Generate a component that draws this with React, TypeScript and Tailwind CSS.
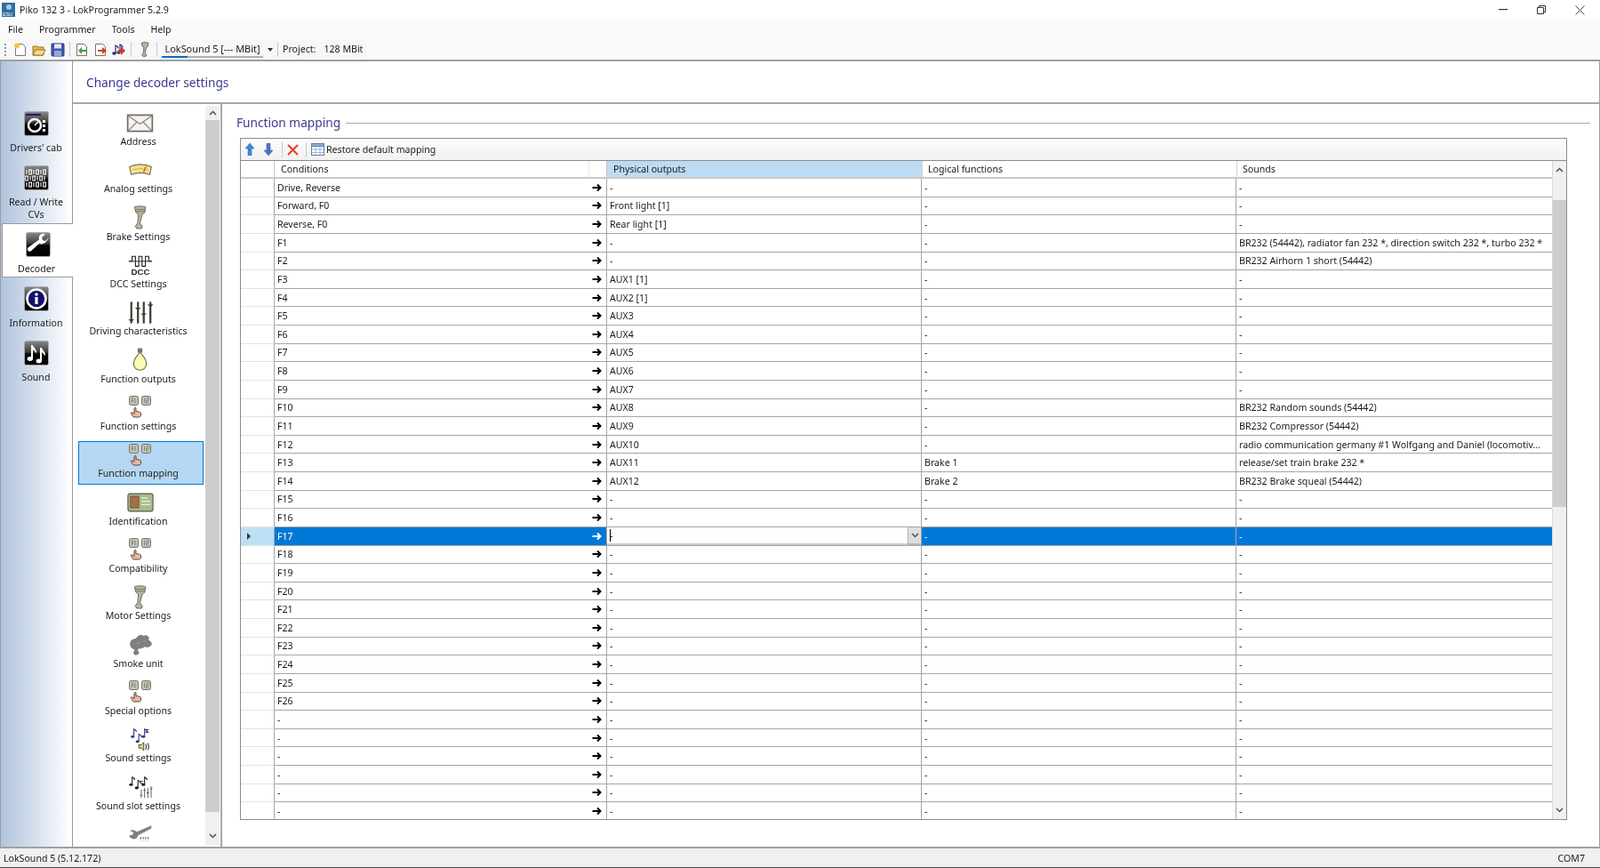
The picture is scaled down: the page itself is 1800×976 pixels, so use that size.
import React from "react";

const Tile = ({ children }: { children: React.ReactNode }) => (
  <svg width="28" height="28" viewBox="0 0 28 28" className="block">
    <defs>
      <linearGradient id="tileg" x1="0" y1="0" x2="0" y2="1">
        <stop offset="0" stopColor="#8a8a8a" />
        <stop offset="0.45" stopColor="#3c3c3c" />
        <stop offset="0.55" stopColor="#050505" />
        <stop offset="1" stopColor="#000" />
      </linearGradient>
    </defs>
    <rect x="0.5" y="0.5" width="27" height="27" rx="2" fill="url(#tileg)" stroke="#aaa" />
    {children}
  </svg>
);

const CabIcon = () => (
  <Tile>
    <rect x="2" y="3" width="17" height="2" fill="#17177a" />
    <circle cx="12" cy="16" r="7" fill="none" stroke="#fff" strokeWidth="2.4" />
    <path d="M12 16l4-4" stroke="#fff" strokeWidth="1.4" />
    <rect x="21" y="10" width="3" height="3" fill="#fff" />
    <rect x="21" y="15" width="3" height="3" fill="#fff" />
    <rect x="21" y="20" width="3" height="3" fill="#fff" />
  </Tile>
);
const BinIcon = () => (
  <Tile>
    {[5, 12, 19].map((y, r) => (
      <g key={y} fill="none" stroke="#fff" strokeWidth="1.1">
        {[3, 7, 11, 15, 19, 23].map((x, c) =>
          (r + c) % 2 === 0 ? (
            <path key={x} d={`M${x} ${y}v5`} />
          ) : (
            <rect key={x} x={x - 1.2} y={y} width="2.6" height="5" />
          ),
        )}
      </g>
    ))}
  </Tile>
);
const WrenchTile = () => (
  <Tile>
    <path
      d="M26 6l-4 4-3-1-1-3 4-4c-3-1-6 0-7 3-.5 1.500-.3 2.500 0 3.500L3 17c-1.500 1.200-1.500 3-.5 4 1 1.200 3 1 4-.2l8.500-7.800c1.500.5 3 .5 4.500 0 3-1 5-4 6.500-7z"
      fill="#fff"
    />
  </Tile>
);
const InfoTile = () => (
  <Tile>
    <circle cx="14" cy="14" r="10.500" fill="#10106a" stroke="#fff" strokeWidth="2.600" />
    <circle cx="14" cy="9" r="1.800" fill="#fff" />
    <rect x="12.400" y="12" width="3.200" height="8" fill="#fff" />
  </Tile>
);
const NotesTile = () => (
  <Tile>
    <path d="M8 20V5l2 0c.5 3 4 4 4 8l-1 1c0-2-2-3-3-4v10z" fill="#fff" />
    <ellipse cx="6.800" cy="20.500" rx="3.200" ry="2.400" fill="#fff" />
    <path d="M18 23V8l2 0c.5 3 4 4 4 8l-1 1c0-2-2-3-3-4v10z" fill="#fff" />
    <ellipse cx="16.800" cy="23" rx="3.200" ry="2.400" fill="#fff" />
  </Tile>
);

const Envelope = () => (
  <svg width="31" height="21" viewBox="0 0 32 22">
    <rect x="1.500" y="1.500" width="29" height="19" fill="#f6f4f0" stroke="#6e6a64" strokeWidth="1.800" />
    <path d="M2 2l14 10L30 2M2 20l10-10M30 20L20 10" fill="none" stroke="#8b8780" strokeWidth="1.300" />
  </svg>
);
const Gauge = () => (
  <svg width="30" height="14" viewBox="0 0 30 16">
    <path d="M1 4c8-4 20-4 28 0l-2 10c-7-2.500-17-2.500-24 0z" fill="#f3e58a" stroke="#77705a" strokeWidth="1.300" />
    <path d="M19 11l3-7" stroke="#c9432b" strokeWidth="1.500" />
    <path d="M5 8c6-2 14-2 20 0" stroke="#c7a35a" fill="none" />
  </svg>
);
const Piston = () => (
  <svg width="17" height="27" viewBox="0 0 18 30">
    <path d="M2 2c4-1.500 10-1.500 14 0l-1 7-3 2-3 11 3 4-1 3H5l-2-3 3-4 1-11-3-2z" fill="#b9b59c" stroke="#66635a" strokeWidth="1" />
    <path d="M3 5h12M3 7.500h12" stroke="#66635a" strokeWidth="0.800" />
    <circle cx="8" cy="26" r="1.200" fill="#fff" stroke="#66635a" strokeWidth="0.600" />
  </svg>
);
const Dcc = () => (
  <svg width="28" height="24" viewBox="0 0 30 25">
    <path d="M1 8h4V2h4v12h4V2h4v12h4V2h4v6h4" fill="none" stroke="#222" strokeWidth="1.200" />
    <path d="M1 8h28" stroke="#222" strokeWidth="1" />
    <text x="15" y="24" textAnchor="middle" fontFamily="Liberation Sans, sans-serif" fontWeight="700" fontSize="10.500" fill="#222">DCC</text>
  </svg>
);
const Sliders = ({ w = 28, h = 27, c = "#3f3e34" }: { w?: number; h?: number; c?: string }) => (
  <svg width={w} height={h} viewBox="0 0 30 28">
    {[4, 12, 19, 27].map((x, i) => (
      <g key={x}>
        <path d={`M${x} 1v26`} stroke={c} strokeWidth="2.400" />
        <path d={`M${x - 3.500} ${[22, 8, 15, 4][i]}h7l-3.500 3.500z`} fill={c} />
      </g>
    ))}
  </svg>
);
const Bulb = () => (
  <svg width="19" height="27" viewBox="0 0 20 30">
    <rect x="7" y="0.500" width="6" height="6" rx="1.500" fill="#777" />
    <path d="M10 5c2 4 8 8 8 15 0 5-4 8-8 8s-8-3-8-8c0-7 6-11 8-15z" fill="#fbf8b8" stroke="#6d6a4a" strokeWidth="1.200" />
  </svg>
);
const Keys = () => (
  <svg width="25" height="25" viewBox="0 0 25 25">
    {[0.5, 14.5].map((x, i) => (
      <g key={x}>
        <rect x={x} y="0.500" width="10" height="10" rx="1.800" fill="#c2c2b4" stroke="#75756a" />
        <path d={i ? `M${x + 3} 3v5M${x + 5} 3h2.500v2.500H${x + 5}v2.500h2.500` : `M${x + 3} 3v5M${x + 3} 3h2M${x + 3} 5.500h2M${x + 6.500} 3v5`} stroke="#6a6a60" strokeWidth="0.700" fill="none" />
      </g>
    ))}
    <path d="M6 14.500c0-1.500 2-1.500 2 0V18c.5-.8 1.800-.6 2 .2.5-.6 1.700-.4 1.800.4.6-.4 1.700 0 1.700 1V22c0 1-1 2-2 2H6c-1 0-1.500-.5-2-1.500L2.500 20c-.5-1 .8-1.800 1.500-1l2 1.500z" fill="#ecb9a4" stroke="#4d342a" strokeWidth="0.900" />
  </svg>
);
const IdCard = () => (
  <svg width="30" height="22" viewBox="0 0 32 23">
    <rect x="1" y="1" width="30" height="21" rx="2.500" fill="#a7bd8a" stroke="#50584a" strokeWidth="1.200" />
    <rect x="4" y="4" width="10" height="14" fill="#a86e4a" stroke="#6d4a33" strokeWidth="0.800" />
    <path d="M17 6h8M17 10h11M17 14h11" stroke="#eef2e2" strokeWidth="1.200" />
  </svg>
);
const Smoke = () => (
  <svg width="28" height="26" viewBox="0 0 30 28">
    <path d="M3 14c-1-5 3-7 7-7 1-4 6-6 9-3 1-2 6-1 6 2 0 1-1 2-1 3 3 0 5 3 4 5-1 3-6 3-8 2-2 2-6 3-8 2 0 2-1 4-1 4 2 0 3 2 1 3-2 2-6 1-5-2 1-1 1-3 1-4-3 0-5-2-5-5z" fill="#7f7f7f" stroke="#6c6c6c" strokeWidth="0.800" />
    <path d="M10 12c2 1 4 0 5-1M18 8c1 1 2 2 4 1" stroke="#9b9b9b" fill="none" />
  </svg>
);
const Note = ({ x, y, c }: { x: number; y: number; c: string }) => (
  <g>
    <path d={`M${x} ${y}v-9c1.500.5 3 1.500 3 3.500`} stroke={c} strokeWidth="1.200" fill="none" />
    <ellipse cx={x - 1.500} cy={y} rx="2.300" ry="1.700" fill={c} />
  </g>
);
const SoundSettings = () => (
  <svg width="26" height="28" viewBox="0 0 28 30">
    <Note x={6} y={12} c="#3a3a8e" />
    <Note x={12} y={18} c="#3a3a8e" />
    <Note x={19} y={12} c="#3a3a8e" />
    <rect x="20" y="3" width="4" height="1.500" fill="#3a3a8e" />
    <rect x="20" y="6" width="4" height="1.500" fill="#3a3a8e" />
    <path d="M12 22h3l3-3v10l-3-3h-3z" fill="#e5d170" stroke="#222" strokeWidth="0.800" />
    <path d="M20 21c1.500 1.500 1.500 5 0 6.500M22.500 20c2 2 2 6 0 8.500" stroke="#222" fill="none" strokeWidth="1.100" />
  </svg>
);
const SoundSlot = () => (
  <svg width="28" height="26" viewBox="0 0 30 28">
    <Note x={5} y={11} c="#222" />
    <Note x={12} y={15} c="#222" />
    <Note x={20} y={11} c="#222" />
    <path d="M15 7h3M15 9.500h3" stroke="#222" />
    <path d="M16 17v10M20 15v12M24 15v12M28 13v14" stroke="#555" strokeWidth="1" />
    <path d="M14.500 24h3M18.500 18h3M22.500 21h3M26.500 16h3" stroke="#555" />
  </svg>
);
const WrenchBits = () => (
  <svg width="27" height="24" viewBox="0 0 30 27">
    <path d="M29 3L11 11c-2-2-5-3-8-2l4 2-1 4-4 0c0 3 4 5 7 4 2-.5 3-2 3-4L29 6z" fill="#808080" stroke="#666" strokeWidth="0.600" />
    {[16, 19, 22, 25].map((x) => (
      <path key={x} d={`M${x} 17v3M${x} 22v3`} stroke="#666" strokeWidth="1.200" />
    ))}
  </svg>
);

const Page = ({ children }: { children?: React.ReactNode }) => (
  <svg width="16" height="16" viewBox="0 0 16 16" className="shrink-0">
    <path d="M2.500 1.500h8l3 3v10h-11z" fill="#fff" stroke="#77746c" />
    {children}
  </svg>
);

const GridIcon = () => (
  <svg width="15" height="14" viewBox="0 0 15 14">
    <rect x="0.500" y="0.500" width="14" height="13" fill="#fff" stroke="#5d7ea8" />
    <rect x="0.500" y="0.500" width="14" height="3" fill="#8fb0d8" stroke="#5d7ea8" />
    <path d="M5 3.500v10M10 3.500v10M.5 7h14M.5 10.500h14" stroke="#8ea8c8" strokeWidth="0.800" />
  </svg>
);

const Chevron = ({ up, className }: { up?: boolean; className?: string }) => (
  <svg width="9" height="6" viewBox="0 0 9 6" className={className}>
    <path d={up ? "M1 5l3.500-3.500L8 5" : "M1 1l3.500 3.500L8 1"} fill="none" stroke="#505050" strokeWidth="1.500" />
  </svg>
);

const rail = [
  { label: ["Drivers' cab"], icon: <CabIcon /> },
  { label: ["Read / Write", "CVs"], icon: <BinIcon /> },
  { label: ["Decoder"], icon: <WrenchTile />, active: true },
  { label: ["Information"], icon: <InfoTile /> },
  { label: ["Sound"], icon: <NotesTile /> },
];

const nav: { label: string; icon: React.ReactNode; sel?: boolean }[] = [
  { label: "Address", icon: <Envelope /> },
  { label: "Analog settings", icon: <Gauge /> },
  { label: "Brake Settings", icon: <Piston /> },
  { label: "DCC Settings", icon: <Dcc /> },
  { label: "Driving characteristics", icon: <Sliders /> },
  { label: "Function outputs", icon: <Bulb /> },
  { label: "Function settings", icon: <Keys /> },
  { label: "Function mapping", icon: <Keys />, sel: true },
  { label: "Identification", icon: <IdCard /> },
  { label: "Compatibility", icon: <Keys /> },
  { label: "Motor Settings", icon: <Piston /> },
  { label: "Smoke unit", icon: <Smoke /> },
  { label: "Special options", icon: <Keys /> },
  { label: "Sound settings", icon: <SoundSettings /> },
  { label: "Sound slot settings", icon: <SoundSlot /> },
  { label: "", icon: <WrenchBits /> },
];

const phys: Record<string, string> = {
  "Forward, F0": "Front light [1]",
  "Reverse, F0": "Rear light [1]",
  F3: "AUX1 [1]",
  F4: "AUX2 [1]",
  F5: "AUX3",
  F6: "AUX4",
  F7: "AUX5",
  F8: "AUX6",
  F9: "AUX7",
  F10: "AUX8",
  F11: "AUX9",
  F12: "AUX10",
  F13: "AUX11",
  F14: "AUX12",
};
const logical: Record<string, string> = { F13: "Brake 1", F14: "Brake 2" };
const sounds: Record<string, string> = {
  F1: "BR232 (54442), radiator fan 232 *, direction switch 232 *, turbo 232 *",
  F2: "BR232 Airhorn 1 short (54442)",
  F10: "BR232 Random sounds (54442)",
  F11: "BR232 Compressor (54442)",
  F12: "radio communication germany #1 Wolfgang and Daniel (locomotiv...",
  F13: "release/set train brake 232 *",
  F14: "BR232 Brake squeal (54442)",
};

const conds = [
  "Drive, Reverse",
  "Forward, F0",
  "Reverse, F0",
  ...Array.from({ length: 26 }, (_, i) => `F${i + 1}`),
  "-",
  "-",
  "-",
  "-",
  "-",
  "-",
];

const Arrow = ({ white }: { white?: boolean }) => (
  <svg width="11" height="10" viewBox="0 0 11 10">
    <path d="M0.500 5h8M6 1.500L9.500 5 6 8.500" fill="none" stroke={white ? "#fff" : "#000"} strokeWidth="2" />
  </svg>
);

function Row({ c }: { c: string }) {
  const sel = c === "F17";
  const line = "border-b border-r border-[#a6a6a6]";
  const bg = sel ? "bg-[#0078d7] text-white" : "";
  return (
    <div className="flex h-[20.63px] shrink-0">
      <div className={`flex w-[38px] items-center border-r border-b border-r-[#a6a6a6] border-b-[#e3e3e3] pl-[6px] ${sel ? "bg-[#bfdff6]" : ""}`}>
        {sel && (
          <svg width="6" height="8" viewBox="0 0 6 8">
            <path d="M1 0l4 4-4 4z" fill="#333" />
          </svg>
        )}
      </div>
      <div className={`flex w-[374px] items-center justify-between pl-[3px] pr-[5px] ${line} ${bg}`}>
        <span>{c}</span>
        <Arrow white={sel} />
      </div>
      {sel ? (
        <div className={`flex w-[354px] items-stretch ${line} bg-white text-black`}>
          <div className="flex flex-1 items-center border-b-2 border-[#c8c8c8] pl-[3px]">
            <span className="h-[14px] w-px bg-black" />
            <span className="-ml-px">-</span>
          </div>
          <div className="flex w-[15px] items-center justify-center border-b-2 border-l border-[#b4b4b4] bg-[#dedede]">
            <Chevron className="text-gray-500" />
          </div>
        </div>
      ) : (
        <div className={`flex w-[354px] items-center pl-[3px] ${line}`}>{phys[c] ?? "-"}</div>
      )}
      <div className={`flex w-[354px] items-center pl-[3px] ${line} ${bg}`}>{logical[c] ?? "-"}</div>
      <div className={`flex flex-1 items-center pl-[3px] border-b border-[#a6a6a6] ${bg}`}>{sounds[c] ?? "-"}</div>
    </div>
  );
}

const Sep = () => <span className="h-[17px] w-px shrink-0 bg-[#c8c8c8]" />;

export default function App() {
  return (
    <div className="flex h-[976px] w-[1800px] flex-col overflow-hidden bg-white font-['Open_Sans','Noto_Sans',sans-serif] text-[10.6px] leading-[14px] text-[#1a1a1a] blur-[0.3px]">
      {/* Title bar */}
      <div className="flex h-[22px] shrink-0 items-center pl-[2px]">
        <svg width="15" height="16" viewBox="0 0 15 16" className="mr-[5px]">
          <rect width="15" height="16" fill="#2f6f9f" />
          <circle cx="8" cy="5" r="3" fill="#a7cbe0" />
          <text x="1" y="15" fontFamily="Liberation Sans, sans-serif" fontSize="5.500" fill="#fff">ESU</text>
        </svg>
        <span>Piko 132 3 - LokProgrammer 5.2.9</span>
        <div className="ml-auto flex items-center">
          <svg width="10" height="2" viewBox="0 0 10 2" className="mr-[33px]">
            <rect width="10" height="1.200" fill="#333" />
          </svg>
          <svg width="10" height="10" viewBox="0 0 10 10" className="mr-[33px]">
            <path d="M.5 2.500h7v7h-7zM2.500 2.500v-2h7v7h-2" fill="none" stroke="#333" />
          </svg>
          <svg width="11" height="11" viewBox="0 0 11 11" className="mr-[17px]">
            <path d="M.5.500l10 10M10.500.500l-10 10" stroke="#333" strokeWidth="0.900" />
          </svg>
        </div>
      </div>
      {/* Menu */}
      <div className="flex h-[22px] shrink-0 items-center gap-[18px] bg-[#fafafa] pl-[9px]">
        <span>File</span>
        <span>Programmer</span>
        <span>Tools</span>
        <span>Help</span>
      </div>
      {/* Toolbar */}
      <div className="flex h-[23px] shrink-0 bg-[#fafafa]">
        <div className="flex w-[412px] items-center gap-[5px] whitespace-nowrap bg-[#f7f7f7] pl-[5px]">
          <span className="mr-[3px] h-[14px] border-l-2 border-dotted border-[#999]" />
          <Page>
            <circle cx="4" cy="3.500" r="3" fill="#f6c93c" />
          </Page>
          <svg width="16" height="16" viewBox="0 0 16 16" className="shrink-0">
            <path d="M1 14V4h5l1 1h6v9z" fill="#e8bc55" stroke="#977321" />
            <path d="M1 14l3-6h11l-3 6z" fill="#f6dc8f" stroke="#977321" />
          </svg>
          <svg width="16" height="16" viewBox="0 0 16 16" className="shrink-0">
            <rect x="1" y="1" width="14" height="14" rx="1" fill="#3f58b0" stroke="#27397e" />
            <rect x="4" y="1.500" width="8" height="5" fill="#e4e8f5" />
            <rect x="4" y="9" width="8" height="6" fill="#9aa6d0" />
          </svg>
          <Sep />
          <Page>
            <path d="M14 8H8V5L4 9l4 4v-3h6z" fill="#3f9e3a" />
          </Page>
          <Page>
            <path d="M5 8h5V5l5 4-5 4v-3H5z" fill="#d5402c" />
          </Page>
          <svg width="16" height="16" viewBox="0 0 16 16" className="shrink-0">
            <Note x={4} y={12} c="#2a2a80" />
            <Note x={9} y={11} c="#2a2a80" />
            <path d="M7 8h3V4l5 5-5 5v-3H7z" fill="#c9392a" />
          </svg>
          <Sep />
          <span className="ml-[2px] flex w-[16px] shrink-0 justify-center">
            <svg width="10" height="17" viewBox="0 0 18 30">
              <path d="M2 2c4-1.500 10-1.500 14 0l-1 7-3 2-3 11 3 4-1 3H5l-2-3 3-4 1-11-3-2z" fill="#b9b59c" stroke="#55524a" strokeWidth="1.500" />
            </svg>
          </span>
          <Sep />
          <div className="relative flex h-full w-[114px] shrink-0 items-center justify-center text-[10.9px]">
            <span className="-mt-px">LokSound 5 [--- MBit]</span>
            <div className="absolute bottom-[2px] left-0 h-[2px] w-full bg-[#b4b4b4]">
              <div className="h-full w-[29px] bg-[#0a6bc0]" />
            </div>
          </div>
          <svg width="6" height="4" viewBox="0 0 6 4" className="shrink-0">
            <path d="M0 0h6L3 4z" fill="#333" />
          </svg>
          <Sep />
          <span className="-mt-px">Project:</span>
          <span className="-mt-px ml-[4px]">128 MBit</span>
        </div>
      </div>

      {/* Body */}
      <div className="flex min-h-0 flex-1 border-y-2 border-r border-[#a0a0a0]">
        {/* Rail */}
        <div className="flex w-[82px] shrink-0 flex-col border-r border-l border-[#9a9a9a] bg-gradient-to-r from-[#b0c4de] to-white pt-[46px]">
          {rail.map((t) => (
            <div
              key={t.label[0]}
              className={`flex flex-col items-center ${t.active ? "-mr-px ml-px border-y border-l border-[#9a9a9a] bg-white pt-[9px] pb-[2px]" : "pt-[10px] pb-[3px]"}`}
            >
              {t.icon}
              <div className={`mt-[6px] text-center ${t.active ? "pr-[3px]" : "pr-[1px]"}`}>
                {t.label.map((l) => (
                  <div key={l}>{l}</div>
                ))}
              </div>
            </div>
          ))}
        </div>

        <div className="flex min-w-0 flex-1 flex-col">
          {/* Header */}
          <div className="flex h-[48px] shrink-0 items-center border-b-2 border-[#a8a8a8] pt-[2px] pl-[15px] text-[13.7px] text-[#3b3b8f]">
            Change decoder settings
          </div>
          <div className="flex min-h-0 flex-1">
            {/* Nav list */}
            <div className="flex w-[168px] shrink-0 border-r-2 border-[#a8a8a8]">
              <div className="flex h-[829px] min-w-0 flex-1 flex-col overflow-hidden pt-[6px] pl-[6px]">
                {nav.map((n) => (
                  <div
                    key={n.label + "x"}
                    className={`mb-[4.33px] flex h-[49px] w-[141px] shrink-0 flex-col items-center border ${n.sel ? "border-[#0078d7] bg-[#b5d7f3]" : "border-transparent"}`}
                  >
                    <div className="flex h-[28px] w-full shrink-0 items-center justify-center pr-[2px]">{n.icon}</div>
                    <div className="pr-[6px] whitespace-nowrap">{n.label}</div>
                  </div>
                ))}
              </div>
              <div className="mt-[2px] mr-[1px] flex h-[832px] w-[16px] shrink-0 flex-col bg-[#f0f0f0]">
                <div className="flex h-[16px] items-center justify-center">
                  <Chevron up />
                </div>
                <div className="h-[778px] bg-[#cdcdcd]" />
                <div className="mt-auto flex h-[22px] items-center justify-center">
                  <Chevron />
                </div>
              </div>
            </div>

            {/* Right panel */}
            <div className="flex min-w-0 flex-1 flex-col pt-[10px] pr-[10px] pl-[16px]">
              <div className="flex h-[22px] items-center text-[13.7px] text-[#3b3b8f]">
                <span className="mr-[6px]">Function mapping</span>
                <span className="h-px flex-1 bg-[#a8a8a8]" />
              </div>
              <div className="mt-[6px] mr-[26px] ml-[4px] flex h-[767px] flex-col overflow-hidden border border-[#8c8c8c]">
                <div className="flex h-[25px] shrink-0 items-center border-b border-[#8c8c8c] bg-gradient-to-b from-[#fcfcfc] to-[#f1f1f1] pl-[4px]">
                  <svg width="12" height="14" viewBox="0 0 12 14" className="mr-[9px]">
                    <path d="M6 0l5 6H8v8H4V6H1z" fill="#3f86d8" stroke="#2d62a8" strokeWidth="0.500" />
                  </svg>
                  <svg width="12" height="14" viewBox="0 0 12 14">
                    <path d="M6 14L1 8h3V0h4v8h3z" fill="#4a74cc" stroke="#3155a0" strokeWidth="0.500" />
                  </svg>
                  <span className="mr-[5px] ml-[9px] h-[17px] w-px bg-[#c8c8c8]" />
                  <svg width="13" height="13" viewBox="0 0 13 13">
                    <path d="M1 1l11 11M12 1L1 12" stroke="#e8412a" strokeWidth="2.200" />
                  </svg>
                  <span className="mr-[5px] ml-[8px] h-[17px] w-px bg-[#c8c8c8]" />
                  <GridIcon />
                  <span className="ml-[2px]">Restore default mapping</span>
                </div>
                <div className="flex min-h-0 flex-1">
                  <div className="flex min-w-0 flex-1 flex-col overflow-hidden">
                    <div className="flex h-[20px] shrink-0 border-b-2 border-[#c8c8c8]">
                      <div className="w-[38px] border-r border-[#c8c8c8]" />
                      <div className="w-[354px] border-r border-[#e8e8e8] pl-[7px] leading-[19px]">Conditions</div>
                      <div className="w-[20px] border-r border-[#c8c8c8]" />
                      <div className="w-[354px] bg-[#bcdcf4] pl-[7px] leading-[19px]">Physical outputs</div>
                      <div className="w-[354px] border-l border-[#d0d0d0] pl-[6px] leading-[19px]">Logical functions</div>
                      <div className="flex-1 border-l border-[#d0d0d0] pl-[6px] leading-[19px]">Sounds</div>
                    </div>
                    {conds.map((c, i) => (
                      <Row key={i} c={c} />
                    ))}
                  </div>
                  <div className="flex w-[16px] shrink-0 flex-col border-l border-[#d8d8d8] bg-[#f0f0f0]">
                    <div className="flex h-[20px] items-center justify-center">
                      <Chevron up />
                    </div>
                    <div className="mt-[24px] h-[345px] bg-[#cdcdcd]" />
                    <div className="mt-auto flex h-[20px] items-center justify-center">
                      <Chevron />
                    </div>
                  </div>
                </div>
              </div>
            </div>
          </div>
        </div>
      </div>

      {/* Status */}
      <div className="flex h-[22px] shrink-0 items-center justify-between border-b border-[#444] bg-[#f0f0f0] pr-[17px] pl-[4px]">
        <span>LokSound 5 (5.12.172)</span>
        <span>COM7</span>
      </div>
    </div>
  );
}
